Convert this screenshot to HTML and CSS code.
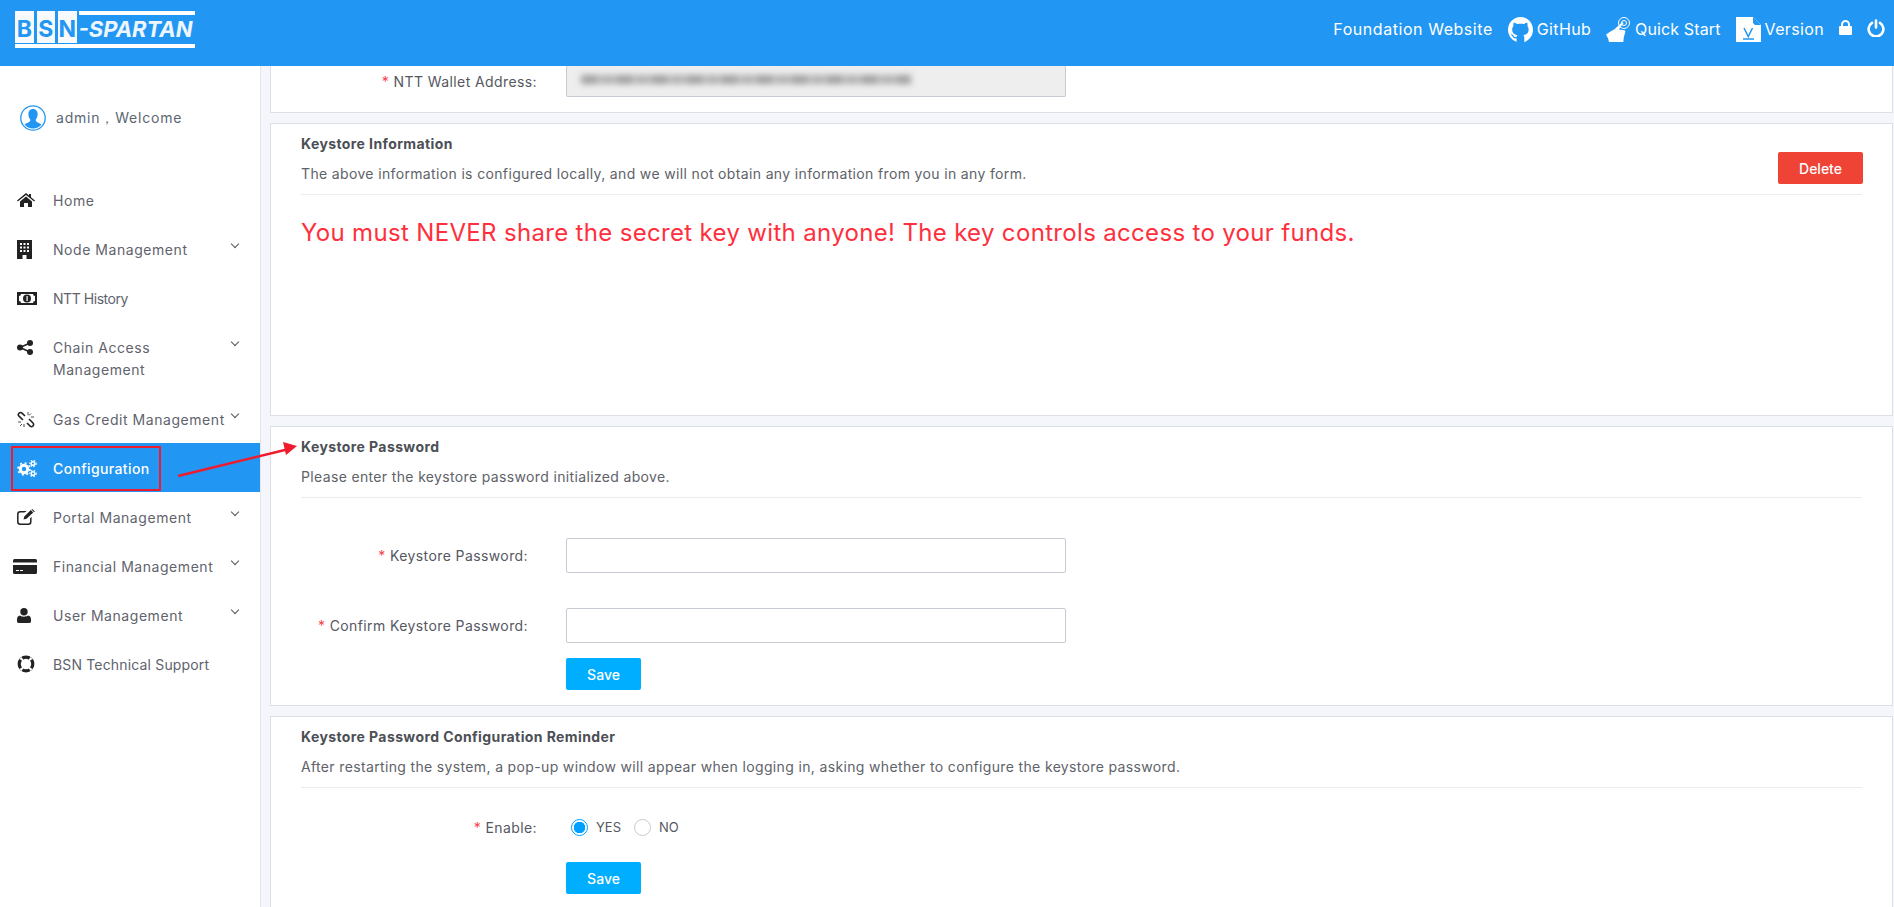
FILE: index.html
```html
<!DOCTYPE html>
<html lang="en">
<head>
<meta charset="utf-8">
<title>BSN-Spartan Configuration</title>
<link rel="stylesheet" href="styles.css">
</head>
<body>
<header class="topbar">
  <div class="logo">
    <div class="logo-tiles"><span class="tile">B</span><span class="tile">S</span><span class="tile">N</span></div>
    <div class="logo-name">-SPARTAN</div>
  </div>
  <nav class="toplinks">
    <a class="toplink toplink-wide">Foundation Website</a>
    <a class="toplink"><svg class="ti ti-gh" viewBox="0 0 25 25"><path fill="#fff" d="M12.5 0C5.6 0 0 5.7 0 12.7c0 5.6 3.6 10.4 8.6 12v-3.4c-2.6.6-3.6-.6-4-1.800-.3-.7-.7-1.300-1.300-1.600-.5-.3-.3-.6.3-.6 1 .1 1.700 1 2.100 1.700 1 1.500 2.300 1.200 3 .8.100-.8.500-1.400.9-1.700-3.100-.4-5.400-1.800-5.400-5.600 0-1.400.5-2.500 1.300-3.400-.1-.3-.5-1.700.2-3.300 0 0 1.100-.4 3.500 1.300 2-.6 4.500-.6 6.500 0 2.400-1.700 3.500-1.300 3.500-1.300.7 1.600.3 3 .1 3.300.9.900 1.300 2 1.300 3.400 0 3.800-2.300 5.200-5.300 5.600.5.400 1 1.200 1 2.400v4.600c5-1.600 8.700-6.400 8.700-12C25 5.700 19.400 0 12.500 0z"/></svg>GitHub</a>
    <a class="toplink toplink-quick"><svg class="ti ti-qs" viewBox="0 0 25 25"><g fill="none" stroke="#fff"><circle cx="18" cy="6" r="2.500" stroke-width="1"/><circle cx="18" cy="6" r="5.500" stroke-width="1"/></g><path fill="#fff" d="M15.800 5.400c.8-.7 2 .3 1.400 1.200l-4.300 6 5.300.7c.9.100 1.300.8 1.100 1.600l-1.500 5.300-.5 5H3l-.9-3.800L0 17.600c2.500-2 5.500-3.400 8.500-5.300z"/></svg>Quick Start</a>
    <a class="toplink"><svg class="ti ti-ver" viewBox="0 0 25 25"><path fill="#fff" d="M0 0h17l8 8v17H0z"/><path fill="#2196f3" d="M17 0l8 8h-6l-2-2z"/><path fill="none" stroke="#2196f3" stroke-width="1.500" d="M8 11l4.300 8.500L16.500 11"/><path fill="none" stroke="#2196f3" stroke-width="1.500" d="M7 22h11"/></svg>Version</a>
    <a class="toplink toplink-icon"><svg class="lock" viewBox="0 0 13 15"><path fill="none" stroke="#fff" stroke-width="2" d="M3 7V4.500a3.500 3.500 0 0 1 7 0V7"/><rect fill="#fff" y="6" width="13" height="9" rx="1"/></svg></a>
    <a class="toplink toplink-icon"><svg class="power" viewBox="0 0 18 18"><path fill="none" stroke="#fff" stroke-width="2.600" stroke-linecap="round" d="M5 3.800a7.400 7.400 0 1 0 8 0M9 1.500v7"/></svg></a>
  </nav>
</header>

<div class="shell">
  <aside class="sidebar">
    <div class="welcome">
      <svg class="avatar" viewBox="0 0 26 26"><circle cx="13" cy="13" r="12.200" fill="#fff" stroke="#2196f3" stroke-width="1.300"/><path fill="#2196f3" d="M13 4c3 0 4.600 2.200 4.600 5.200 0 2.200-1 4.400-2 5.500 0 1.300.6 2 2.200 2.700 1.400.6 2.800 1.200 3.700 2.200a11 11 0 0 1-17 0c.9-1 2.300-1.600 3.700-2.200 1.600-.7 2.200-1.400 2.200-2.700-1-1.100-2-3.300-2-5.500C8.400 6.200 10 4 13 4z"/></svg>
      <span class="welcome-text">admin，Welcome</span>
    </div>
    <ul class="menu">
      <li class="item"><span class="ic"><svg viewBox="0 0 18 14" width="18" height="14"><path fill="#222" d="M9 0l3 2.500V1h2v3.200L18 7.500l-.8 1L9 2 .8 8.500 0 7.500z"/><path fill="#222" d="M3 8.500L9 3.600l6 4.900V14h-4v-4H7v4H3z"/></svg></span><span class="lbl">Home</span></li>
      <li class="item"><span class="ic"><svg viewBox="0 0 15 19" width="15" height="19"><path fill="#222" d="M0 0h15v19H0z"/><path fill="#fff" d="M3 3h2v2H3zM6.500 3h2v2h-2zM10 3h2v2h-2zM3 6.500h2v2H3zM6.500 6.500h2v2h-2zM10 6.500h2v2h-2zM3 10h2v2H3zM6.500 10h2v2h-2zM10 10h2v2h-2zM5.500 15h4v4h-4z"/></svg></span><span class="lbl">Node Management</span><span class="chev"></span></li>
      <li class="item"><span class="ic"><svg viewBox="0 0 20 13" width="20" height="13"><path fill="#222" d="M0 0h20v13H0z"/><path fill="#fff" d="M4 2h12a2 2 0 0 0 2 2v5a2 2 0 0 0-2 2H4a2 2 0 0 0-2-2V4a2 2 0 0 0 2-2z"/><circle cx="10" cy="6.500" r="4" fill="#222"/><path fill="#fff" d="M9.500 4h1.200v5H9.500z"/></svg></span><span class="lbl lbl-narrow">NTT History</span></li>
      <li class="item item-tall"><span class="ic"><svg viewBox="0 0 16 15" width="16" height="15"><g fill="#222"><circle cx="3" cy="7.500" r="3"/><circle cx="13" cy="3" r="3"/><circle cx="13" cy="12" r="3"/></g><path fill="none" stroke="#222" stroke-width="1.500" d="M3 7.500L13 3M3 7.500L13 12"/></svg></span><span class="lbl">Chain Access Management</span><span class="chev"></span></li>
      <li class="item"><span class="ic"><svg viewBox="0 0 18 17" width="18" height="17"><g fill="none" stroke="#222" stroke-width="1.600"><path d="M8 5L5 2.200a2 2 0 0 0-3 3L6 9"/><path d="M10 12l3 3a2 2 0 0 0 3-3l-4-4"/></g><path stroke="#222" stroke-width=".8" d="M11 1v3M14 2.500l-2 2M17 6h-3M1 11h3M3 15l2-2M7 16v-3"/></svg></span><span class="lbl">Gas Credit Management</span><span class="chev"></span></li>
      <li class="item item-active"><span class="ic"><svg viewBox="0 0 20 17" width="20" height="17"><g fill="none" stroke="#fff"><circle cx="7" cy="9" r="3.700" stroke-width="3"/><circle cx="7" cy="9" r="6" stroke-width="1.600" stroke-dasharray="2 2.700"/><circle cx="16" cy="3.500" r="1.800" stroke-width="1.500"/><circle cx="16" cy="3.500" r="3.100" stroke-width="1.200" stroke-dasharray="1.500 1.500"/><circle cx="16" cy="13.500" r="1.800" stroke-width="1.500"/><circle cx="16" cy="13.500" r="3.100" stroke-width="1.200" stroke-dasharray="1.500 1.500"/></g></svg></span><span class="lbl">Configuration</span></li>
      <li class="item"><span class="ic"><svg viewBox="0 0 18 16" width="18" height="16"><rect x=".8" y="2.800" width="13" height="12.400" rx="2.500" fill="none" stroke="#222" stroke-width="1.500"/><path fill="#fff" d="M6 5L12 0h6v5l-7 6H6z"/><path fill="#222" d="M6.500 10.500l.8-3L13.800 1l2.400 2.400-6.600 6.400z"/><path fill="#222" d="M14.500.5l.8-.5 2.500 2.500-.8.800z"/></svg></span><span class="lbl">Portal Management</span><span class="chev"></span></li>
      <li class="item"><span class="ic ic-wide"><svg viewBox="0 0 24 15" width="24" height="15"><rect width="24" height="15" rx="1.500" fill="#222"/><path fill="#fff" d="M0 3.500h24V6H0zM3 11h3v1H3zM7 11h3v1H7z"/></svg></span><span class="lbl">Financial Management</span><span class="chev"></span></li>
      <li class="item"><span class="ic"><svg viewBox="0 0 14 15" width="14" height="15"><circle cx="7" cy="3.700" r="3.700" fill="#222"/><path fill="#222" d="M3 7.500c1 .8 2.500 1.200 4 1.200s3-.4 4-1.200c2 .3 3 1.800 3 4v1.800c0 1-.7 1.700-1.700 1.700H1.700C.7 15 0 14.300 0 13.300v-1.800c0-2.200 1-3.700 3-4z"/></svg></span><span class="lbl">User Management</span><span class="chev"></span></li>
      <li class="item item-last"><span class="ic"><svg viewBox="0 0 18 18" width="18" height="18"><circle cx="9" cy="9" r="6.800" fill="none" stroke="#222" stroke-width="3.200"/><path fill="#fff" d="M2.500 4l2-2 2 3-1 1zM15.500 4l-2-2-2 3 1 1zM2.500 14l2 2 2-3-1-1zM15.500 14l-2 2-2-3 1-1z"/></svg></span><span class="lbl lbl-tight">BSN Technical Support</span></li>
    </ul>
  </aside>

  <main class="content">
    <section class="card card-clipped">
      <div class="row row-clipped">
        <label class="flabel"><span class="req">*</span> NTT Wallet Address:</label>
        <div class="field field-disabled"><span class="blurred"></span></div>
      </div>
    </section>

    <section class="card card-info">
      <div class="card-head card-head-split">
        <div>
          <h2 class="title">Keystore Information</h2>
          <p class="sub">The above information is configured locally, and we will not obtain any information from you in any form.</p>
        </div>
        <button class="btn btn-danger">Delete</button>
      </div>
      <p class="warning">You must NEVER share the secret key with anyone! The key controls access to your funds.</p>
    </section>

    <section class="card card-pass">
      <div class="card-head">
        <h2 class="title">Keystore Password</h2>
        <p class="sub">Please enter the keystore password initialized above.</p>
      </div>
      <div class="row row-first">
        <label class="flabel flabel-in"><span class="req">*</span> Keystore Password:</label>
        <input class="field" type="password">
      </div>
      <div class="row row-second">
        <label class="flabel flabel-in"><span class="req">*</span> Confirm Keystore Password:</label>
        <input class="field" type="password">
      </div>
      <div class="actions"><button class="btn btn-primary">Save</button></div>
    </section>

    <section class="card card-remind">
      <div class="card-head">
        <h2 class="title">Keystore Password Configuration Reminder</h2>
        <p class="sub">After restarting the system, a pop-up window will appear when logging in, asking whether to configure the keystore password.</p>
      </div>
      <div class="row row-enable">
        <label class="flabel"><span class="req">*</span> Enable:</label>
        <div class="radios">
          <label class="radio"><input type="radio" name="enable" checked><span>YES</span></label>
          <label class="radio"><input type="radio" name="enable"><span>NO</span></label>
        </div>
      </div>
      <div class="actions actions-enable"><button class="btn btn-primary">Save</button></div>
    </section>
  </main>
</div>

<div class="callout-box"></div>
<svg class="callout-arrow" viewBox="0 0 130 40" width="130" height="40"><path stroke="#ee1c2e" stroke-width="2.500" d="M1 36L112 9"/><path fill="#ee1c2e" d="M120 6L106 2l3 13z"/></svg>
</body>
</html>
```

FILE: styles.css
```css
* { box-sizing: border-box; }
html, body { margin: 0; height: 100%; overflow: hidden; }
body {
  font-family: "Inter", "Open Sans", sans-serif;
  font-size: 14px;
  color: #555a63;
  background: #f4f6fb;
}

/* Top bar */
.topbar {
  height: 66px;
  background: #2196f3;
  display: flex;
  justify-content: space-between;
  align-items: flex-start;
  padding: 11px 9px 0 15px;
  position: relative;
  z-index: 2;
}
.logo { display: flex; width: 180px; height: 37px; border-bottom: 4px solid #fff; }
.logo-tiles { display: flex; gap: 3px; }
.tile {
  width: 18.500px;
  height: 32px;
  background: #f7f9fb;
  color: #2196f3;
  font: 700 23px/36px "Inter", sans-serif;
  text-align: center;
}
.logo-name {
  margin-left: 2px;
  flex: 1;
  height: 32px;
  border-top: 4px solid #fff;
  color: #eef6fd;
  font: italic 700 22px/28px "Inter", sans-serif;
  white-space: nowrap;
}
.toplinks { display: flex; align-items: center; height: 36px; gap: 15px; }
.toplink {
  display: flex;
  align-items: center;
  gap: 4px;
  color: #fff;
  font-size: 16px;
  letter-spacing: .35px;
  white-space: nowrap;
}
.toplink-wide { letter-spacing: .55px; }
.toplink-quick { letter-spacing: .13px; }
.ti { width: 25px; height: 25px; }
.toplink-icon { margin-top: -3px; }
.lock { width: 13px; height: 15px; }
.power { width: 18px; height: 18px; }

/* Shell */
.shell { display: flex; height: calc(100vh - 66px); }
.sidebar {
  width: 261px;
  flex: none;
  background: #fff;
  border-right: 1px solid #e3e5ec;
}
.welcome {
  height: 109px;
  padding: 0 0 5px 20px;
  display: flex;
  align-items: center;
  gap: 10px;
}
.avatar { width: 26px; height: 26px; }
.welcome-text { font-size: 14px; color: #5c6672; letter-spacing: .8px; }

.menu { list-style: none; margin: 0; padding: 0; }
.item {
  height: 49px;
  display: flex;
  align-items: flex-start;
  padding: 15px 0 0 0;
  color: #5f636d;
  line-height: 22px;
  font-size: 14px;
}
.item-tall { height: 72px; padding-top: 15px; }
.item-last { height: 51px; }
.item-active { background: #2196f3; color: #fff; font-weight: 500; }
.ic {
  width: 53px;
  flex: none;
  height: 20px;
  padding-left: 17px;
  display: flex;
  align-items: center;
}
.ic-wide { padding-left: 13px; }
.lbl { width: 175px; flex: none; letter-spacing: .55px; }
.item-active .lbl { letter-spacing: .38px; }
.lbl-narrow { letter-spacing: -.45px; }
.lbl-tight { letter-spacing: .16px; }
.chev {
  width: 6px;
  height: 6px;
  margin: 2px 0 0 4px;
  border-right: 1px solid #555;
  border-bottom: 1px solid #555;
  transform: rotate(45deg);
}

/* Content */
.content {
  flex: 1;
  min-width: 0;
  padding: 0 1px 0 9px;
  display: flex;
  flex-direction: column;
  gap: 10px;
  overflow: hidden;
}
.card {
  flex: none;
  background: #fff;
  border: 1px solid #dcdfe5;
  padding: 0 30px;
}
.card-clipped { height: 47px; border-top: 0; }
.card-info { height: 293px; padding-top: 10px; }
.card-pass { height: 280px; padding-top: 10px; }
.card-remind { height: 200px; padding-top: 10px; }
.card-head { height: 61px; border-bottom: 1px solid #ebecef; }
.card-head-split { display: flex; justify-content: space-between; align-items: flex-start; }
.title { margin: 0; font-size: 14px; line-height: 20px; font-weight: 700; color: #4c4f55; letter-spacing: .4px; }
.sub { margin: 10px 0 0; font-size: 14px; line-height: 20px; color: #5e6269; white-space: nowrap; letter-spacing: .35px; }
.warning { margin: 18px 0 0; font-size: 24px; line-height: 40px; color: #ff2f3e; white-space: nowrap; letter-spacing: .33px; }

.btn {
  display: block;
  width: 75px;
  height: 32px;
  padding: 0;
  border: 0;
  border-radius: 2px;
  color: #fff;
  font: 500 14px "Inter", sans-serif;
}
.btn-primary { background: #00aeff; }
.btn-danger { width: 85px; background: #ee4335; margin: 18px -1px 0 0; }

.row { display: flex; align-items: center; }
.row-clipped { height: 31px; }
.row-first { margin-top: 40px; }
.row-second { margin-top: 35px; }
.row-enable { margin-top: 27px; height: 24px; }
.flabel {
  width: 265px;
  flex: none;
  padding-right: 29px;
  text-align: right;
  font-size: 14px;
  letter-spacing: .4px;
  color: #55585f;
  white-space: nowrap;
}
.flabel-in { padding-right: 38px; }
.req { color: #f5434f; }
.field {
  width: 500px;
  height: 35px;
  background: #fff;
  border: 1px solid #c6cad2;
  border-radius: 2px;
  padding: 0;
  display: block;
}
.field-disabled {
  height: 31px;
  background: #eee;
  border-top: 0;
  padding: 0 0 0 14px;
  display: flex;
  align-items: center;
}
.blurred {
  width: 330px;
  height: 9px;
  margin-top: -4px;
  background: repeating-linear-gradient(90deg, #a0a0a0 0 17px, #c8c8c8 17px 20px, #b0b0b0 20px 33px, #d0d0d0 33px 35px);
  filter: blur(3px);
}
.actions { margin: 15px 0 0 265px; }
.actions-enable { margin-top: 23px; }
.radios { display: flex; align-items: center; padding-left: 5px; gap: 13px; }
.radio { display: flex; align-items: center; gap: 8px; font-size: 13px; color: #55585f; }
.radio input {
  appearance: none;
  width: 17px;
  height: 17px;
  margin: 0;
  border: 1px solid #c6c9cf;
  border-radius: 50%;
  background: #fff;
}
.radio input:checked {
  border: 1px solid #00a0ff;
  background: radial-gradient(circle, #00a0ff 0 5.500px, #fff 6px);
}

/* Annotations drawn over the page */
.callout-box {
  position: absolute;
  left: 11px;
  top: 446px;
  width: 150px;
  height: 45px;
  border: 2px solid #ee1c2e;
}
.callout-arrow { position: absolute; left: 177px; top: 440px; }
```
